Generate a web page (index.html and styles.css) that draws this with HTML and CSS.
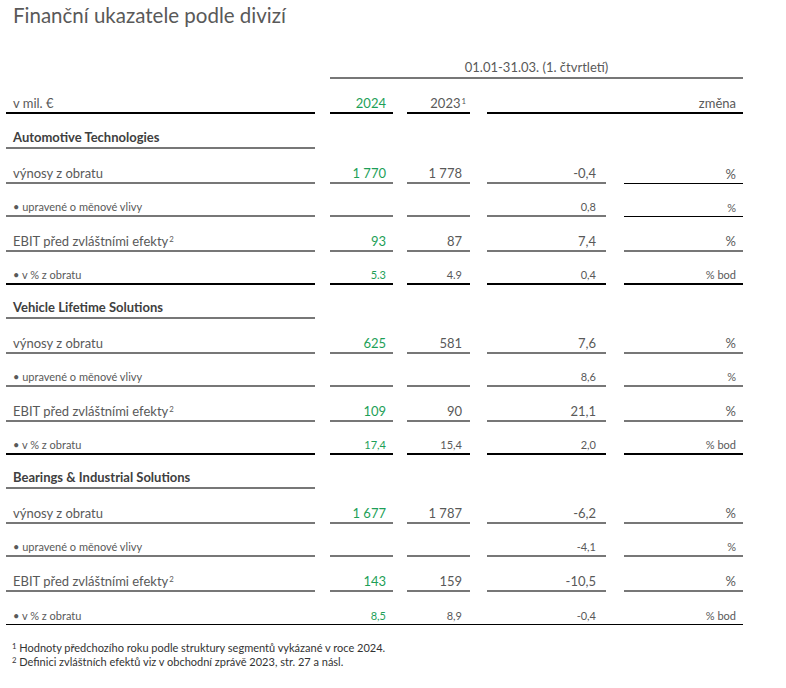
FILE: index.html
```html
<!DOCTYPE html>
<html lang="cs">
<head>
<meta charset="utf-8">
<title>Finanční ukazatele podle divizí</title>
<link rel="stylesheet" href="styles.css">
</head>
<body>
<div class="page">
  <h1 class="title">Finanční ukazatele podle divizí</h1>
  <div class="table">
    <div class="row period">
      <div class="c lab nob"></div>
      <div class="c span-all"><span>01.01-31.03. (1. čtvrtletí)</span></div>
    </div>
    <div class="row head">
      <div class="c lab bk"><span>v mil. €</span></div>
      <div class="c n1 bk green"><span>2024</span></div>
      <div class="c n2 bk"><span>2023<sup>1</sup></span></div>
      <div class="c chg-unit bk"><span>změna</span></div>
    </div>

    <div class="row sec">
      <div class="c lab gr"><span>Automotive Technologies</span></div>
    </div>
    <div class="row main">
      <div class="c lab gr"><span>výnosy z obratu</span></div>
      <div class="c n1 gr green"><span>1 770</span></div>
      <div class="c n2 gr"><span>1 778</span></div>
      <div class="c chg gr"><span>-0,4</span></div>
      <div class="c unit thin"><span>%</span></div>
    </div>
    <div class="row sub">
      <div class="c lab gr"><span>• upravené o měnové vlivy</span></div>
      <div class="c n1 gr green"></div>
      <div class="c n2 gr"></div>
      <div class="c chg gr"><span>0,8</span></div>
      <div class="c unit thin"><span>%</span></div>
    </div>
    <div class="row main">
      <div class="c lab gr"><span>EBIT před zvláštními efekty<sup>2</sup></span></div>
      <div class="c n1 gr green"><span>93</span></div>
      <div class="c n2 gr"><span>87</span></div>
      <div class="c chg gr"><span>7,4</span></div>
      <div class="c unit gr"><span>%</span></div>
    </div>
    <div class="row sub">
      <div class="c lab bk"><span>• v % z obratu</span></div>
      <div class="c n1 bk green"><span>5.3</span></div>
      <div class="c n2 bk"><span>4.9</span></div>
      <div class="c chg bk"><span>0,4</span></div>
      <div class="c unit bk"><span>% bod</span></div>
    </div>

    <div class="row sec">
      <div class="c lab gr"><span>Vehicle Lifetime Solutions</span></div>
    </div>
    <div class="row main">
      <div class="c lab gr"><span>výnosy z obratu</span></div>
      <div class="c n1 gr green"><span>625</span></div>
      <div class="c n2 gr"><span>581</span></div>
      <div class="c chg gr"><span>7,6</span></div>
      <div class="c unit gr"><span>%</span></div>
    </div>
    <div class="row sub">
      <div class="c lab gr"><span>• upravené o měnové vlivy</span></div>
      <div class="c n1 gr green"></div>
      <div class="c n2 gr"></div>
      <div class="c chg gr"><span>8,6</span></div>
      <div class="c unit gr"><span>%</span></div>
    </div>
    <div class="row main">
      <div class="c lab gr"><span>EBIT před zvláštními efekty<sup>2</sup></span></div>
      <div class="c n1 gr green"><span>109</span></div>
      <div class="c n2 gr"><span>90</span></div>
      <div class="c chg gr"><span>21,1</span></div>
      <div class="c unit gr"><span>%</span></div>
    </div>
    <div class="row sub">
      <div class="c lab bk"><span>• v % z obratu</span></div>
      <div class="c n1 bk green"><span>17,4</span></div>
      <div class="c n2 bk"><span>15,4</span></div>
      <div class="c chg bk"><span>2,0</span></div>
      <div class="c unit bk"><span>% bod</span></div>
    </div>

    <div class="row sec">
      <div class="c lab gr"><span>Bearings &amp; Industrial Solutions</span></div>
    </div>
    <div class="row main">
      <div class="c lab gr"><span>výnosy z obratu</span></div>
      <div class="c n1 gr green"><span>1 677</span></div>
      <div class="c n2 gr"><span>1 787</span></div>
      <div class="c chg gr"><span>-6,2</span></div>
      <div class="c unit gr"><span>%</span></div>
    </div>
    <div class="row sub">
      <div class="c lab gr"><span>• upravené o měnové vlivy</span></div>
      <div class="c n1 gr green"></div>
      <div class="c n2 gr"></div>
      <div class="c chg gr"><span>-4,1</span></div>
      <div class="c unit gr"><span>%</span></div>
    </div>
    <div class="row main">
      <div class="c lab gr"><span>EBIT před zvláštními efekty<sup>2</sup></span></div>
      <div class="c n1 gr green"><span>143</span></div>
      <div class="c n2 gr"><span>159</span></div>
      <div class="c chg gr"><span>-10,5</span></div>
      <div class="c unit gr"><span>%</span></div>
    </div>
    <div class="row sub last">
      <div class="c lab"><span>• v % z obratu</span></div>
      <div class="c n1 green"><span>8,5</span></div>
      <div class="c n2"><span>8,9</span></div>
      <div class="c chg"><span>-0,4</span></div>
      <div class="c unit"><span>% bod</span></div>
    </div>
  </div>
  <div class="notes">
    <p><sup>1</sup> Hodnoty předchozího roku podle struktury segmentů vykázané v roce 2024.</p>
    <p><sup>2</sup> Definici zvláštních efektů viz v obchodní zprávě 2023, str. 27 a násl.</p>
  </div>
</div>
</body>
</html>
```

FILE: styles.css
```css
* { box-sizing: border-box; }
html, body { margin: 0; padding: 0; background: #fff; }
body {
  font-family: Lato, "Open Sans", sans-serif;
  color: #595959;
}
.page {
  width: 786px;
  padding-left: 6px;
}
.title {
  margin: 0;
  height: 44px;
  padding: 3px 0 0 7px;
  font-size: 20.5px;
  line-height: 24px;
  font-weight: 400;
  color: #595959;
}
.table { width: 737px; }
.row {
  display: flex;
  align-items: stretch;
}
.row.period { height: 35px; }
.row.head { height: 35px; }
.row.sec { height: 35px; }
.row.sec ~ .row.sec { height: 34px; }
.row.main { height: 35px; }
.row.sub { height: 33px; }

.c {
  display: flex;
  align-items: flex-end;
  justify-content: flex-end;
  padding-bottom: 3px;
  white-space: nowrap;
}
.c > span { display: block; }
.lab {
  width: 309px;
  justify-content: flex-start;
  padding-left: 7px;
}
.n1 { width: 63px; margin-left: 15px; padding-right: 7px; }
.n2 { width: 63px; margin-left: 14px; padding-right: 4px; }
.chg { width: 119px; margin-left: 17px; padding-right: 10px; }
.unit { width: 119px; margin-left: 18px; padding-right: 7px; }
.chg-unit { width: 256px; margin-left: 17px; padding-right: 7px; }
.span-all { width: 413px; margin-left: 15px; justify-content: center; border-bottom: 2px solid #777; }

.gr { border-bottom: 2px solid #777; }
.bk { border-bottom: 2px solid #000; }
.thin { border-bottom: 1px solid #000; }
.green { color: #1d9f58; }

.main .n2, .sub .n2 { padding-right: 8px; }

.period .c { font-size: 13px; padding-bottom: 2px; }
.head .c { font-size: 13px; padding-bottom: 1px; }
.sec .c {
  font-size: 13px;
  font-weight: 700;
  color: #404040;
  padding-bottom: 2px;
}
.main .c { font-size: 13px; padding-bottom: 1px; }
.sub .c { font-size: 11px; padding-bottom: 2px; }
.row.last { border-bottom: 1px solid #000; }
.row.last .c { padding-bottom: 2px; }

sup {
  font-size: 0.6em;
  line-height: 0;
  position: relative;
  top: -0.55em;
  vertical-align: baseline;
  margin-left: 1px;
}
.notes {
  margin-top: 16px;
  padding-left: 6px;
  font-size: 11px;
  line-height: 14px;
  color: #333;
}
.notes p { margin: 0; }
.notes sup { margin-left: 0; font-size: 0.7em; top: -0.45em; }
```
